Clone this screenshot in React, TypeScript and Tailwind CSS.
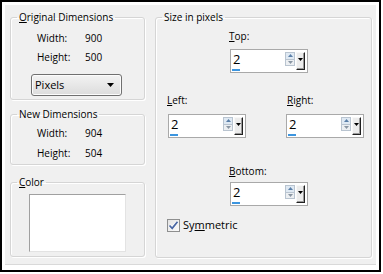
import type { ReactNode } from 'react'

function Group({ title, className, children }: { title: ReactNode; className: string; children?: ReactNode }) {
  return (
    <fieldset
      className={`rounded-[3px] border border-[#d5d5d5] shadow-[inset_1px_1px_0_#ffffff,1px_1px_0_#ffffff] ${className}`}
    >
      <legend className="ml-[6px] px-[2px] leading-[15px]">{title}</legend>
      {children}
    </fieldset>
  )
}

function Arrow() {
  return (
    <svg width="7" height="4" viewBox="0 0 7 4">
      <path d="M0 0H7L3.5 4Z" fill="#000" />
    </svg>
  )
}

function Spinner() {
  return (
    <div className="flex h-[24px] w-[78px] border border-[#a9a9a9] bg-white">
      <div className="flex flex-1 flex-col pl-[1px]">
        <span className="mt-[1px] pl-[1px] text-[13px] leading-[17px]">2</span>
        <span className="mt-[1px] h-[2px] w-[8px] bg-[#3c95df]" />
      </div>
      <div className="mt-[2px] flex h-[14px] w-[10px] flex-col border border-[#b9c4d0]">
        <div className="flex flex-1 items-center justify-center bg-[#dfe9f3]">
          <svg width="5" height="3" viewBox="0 0 5 3"><path d="M2.5 0L5 3H0Z" fill="#5a7fa8" /></svg>
        </div>
        <div className="flex flex-1 items-center justify-center border-t border-[#b9c4d0] bg-[#eceff2]">
          <svg width="5" height="3" viewBox="0 0 5 3"><path d="M0 0H5L2.5 3Z" fill="#8a96a3" /></svg>
        </div>
      </div>
      <div className="ml-[1px] mr-[2px] mt-[2px] flex h-[18px] w-[9px] justify-center border border-b-[#202020] border-l-[#f8f8f8] border-r-[#202020] border-t-[#f8f8f8] bg-[#ececec] pt-[5px] shadow-[inset_-1px_-1px_0_#9a9a9a]">
        <svg width="5" height="3" viewBox="0 0 5 3"><path d="M0 0H5L2.5 3Z" fill="#000" /></svg>
      </div>
    </div>
  )
}

function Row({ label, value, h }: { label: string; value: string; h: string }) {
  return (
    <div className={`flex items-center pl-[26px] ${h}`}>
      <span className="w-[48px]">{label}</span>
      <span>{value}</span>
    </div>
  )
}

export default function App() {
  return (
    <div className="h-[274px] w-[383px] bg-white font-['Open_Sans',sans-serif] text-[10px] text-black">
      <div className="h-[272px] w-[381px] border-2 border-black bg-white p-[3px] pb-[5px]">
        <div className="flex h-full gap-[10px] border-b border-[#d9d9d9] bg-[#f0f0f0] pl-[5px] pt-[5px]">
          {/* left column */}
          <div className="flex w-[135px] flex-col">
            <Group title={<><u>O</u>riginal Dimensions</>} className="h-[90px]">
              <div className="pt-[4px]">
                <Row label="Width:" value="900" h="h-[19px]" />
                <Row label="Height:" value="500" h="h-[19px]" />
              </div>
              <div className="ml-[20px] mt-[7px] flex h-[22px] w-[91px] items-center justify-between rounded-[3px] border border-[#707070] bg-gradient-to-b from-[#f3f3f3] to-[#dcdcdc] pl-[3px] pr-[7px] shadow-[inset_0_0_0_1px_#fcfcfc]">
                <span className="text-[11px]">Pixels</span>
                <Arrow />
              </div>
            </Group>
            <Group title="New Dimensions" className="mt-[7px] h-[58px]">
              <div className="pt-[1px]">
                <Row label="Width:" value="904" h="h-[20px]" />
                <Row label="Height:" value="504" h="h-[20px]" />
              </div>
            </Group>
            <Group title={<><u>C</u>olor</>} className="mt-[10px] h-[82px]">
              <div className="ml-[18px] mt-[4px] h-[58px] w-[97px] border border-b-[#e3e3e3] border-l-[#a0a0a0] border-r-[#e3e3e3] border-t-[#a0a0a0] bg-white" />
            </Group>
          </div>

          {/* right column */}
          <Group title="Size in pixels" className="h-[248px] w-[217px]">
            <div className="flex flex-col">
              <span className="ml-[73px] mt-[4px] leading-[15px]"><u>T</u>op:</span>
              <div className="ml-[74px] mt-[5px]"><Spinner /></div>
              <div className="mt-[20px] flex leading-[15px]">
                <span className="ml-[11px] w-[120px]"><u>L</u>eft:</span>
                <span><u>R</u>ight:</span>
              </div>
              <div className="mt-[6px] flex">
                <div className="ml-[12px]"><Spinner /></div>
                <div className="ml-[40px]"><Spinner /></div>
              </div>
              <span className="ml-[73px] mt-[26px] leading-[15px]"><u>B</u>ottom:</span>
              <div className="ml-[74px] mt-[3px]"><Spinner /></div>
              <div className="ml-[11px] mt-[11px] flex items-center gap-[3px]">
                <div className="flex h-[13px] w-[13px] items-center justify-center border border-[#8e8f8f] bg-gradient-to-br from-[#e4e4e4] to-[#fafafa]">
                  <svg width="11" height="11" viewBox="0 0 11 11">
                    <path d="M1.5 5.5L4.2 8.3L9.5 1.8" fill="none" stroke="#ffffff" strokeWidth="3" />
                    <path d="M1.5 5.5L4.2 8.3L9.5 1.8" fill="none" stroke="#4a67a4" strokeWidth="1.8" />
                  </svg>
                </div>
                <span className="text-[11px]">Sy<u>m</u>metric</span>
              </div>
            </div>
          </Group>
        </div>
      </div>
    </div>
  )
}
